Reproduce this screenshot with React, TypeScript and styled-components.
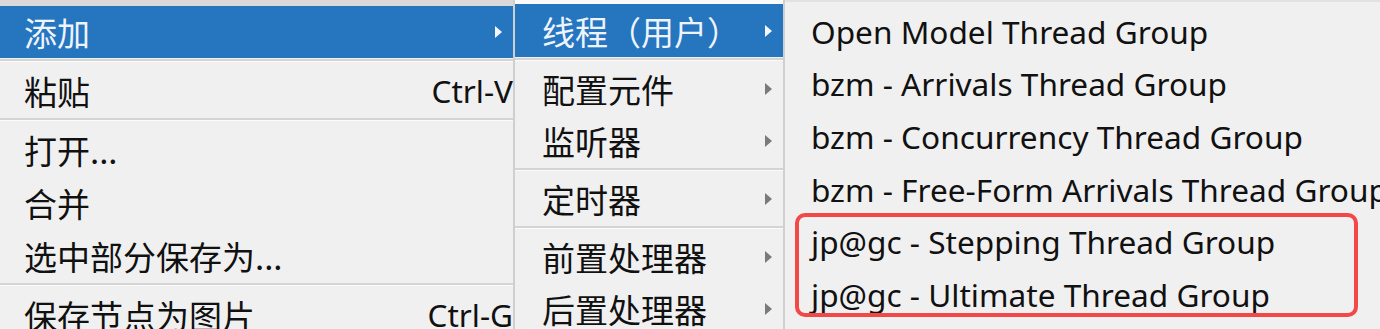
import React from 'react';
import styled, { createGlobalStyle } from 'styled-components';

const GlobalStyle = createGlobalStyle`
  html, body {
    margin: 0;
    padding: 0;
    background: #f0f0f0;
    overflow: hidden;
  }
  body {
    font-family: "Noto Sans", "Noto Sans CJK SC", sans-serif;
  }
`

const Screen = styled.div`
  display: flex;
  width: 1380px;
  height: 329px;
  overflow: hidden;
  background: #f0f0f0;
  position: relative;
`

const Menu = styled.div<{ $width: number; $top: number; $strip: string }>`
  display: flex;
  flex-direction: column;
  width: ${p => p.$width}px;
  flex: none;
  padding-top: ${p => p.$top}px;
  background: linear-gradient(${p => p.$strip}, ${p => p.$strip}) top / 100% ${p => p.$top}px no-repeat, #f0f0f0;
  border-right: 2px solid #cfcfcf;
`

const ThreadList = styled.div`
  flex: 1;
  display: flex;
  flex-direction: column;
  padding-top: 3px;
  border-top: 2px solid #e2e2e2;
`

const Row = styled.div<{ $active?: boolean; $height?: number; $indent: number }>`
  display: flex;
  align-items: center;
  height: ${p => p.$height || 53}px;
  flex: none;
  padding: 0 10px 0 ${p => p.$indent}px;
  background: ${p => (p.$active ? '#2675bf' : 'transparent')};
  color: ${p => (p.$active ? '#eef4fb' : '#111')};
  font-size: 33px;
  white-space: nowrap;
`

const Label = styled.span`
  flex: 1;
  font-family: "Noto Sans CJK SC", sans-serif;
`

const Shortcut = styled.span`
  font-family: "Noto Sans", sans-serif;
  font-size: 31.5px;
  margin-right: -10px;
`

const Arrow = styled.span<{ $light?: boolean }>`
  width: 0;
  height: 0;
  border-top: 6px solid transparent;
  border-bottom: 6px solid transparent;
  border-left: 7px solid ${p => (p.$light ? '#f4f8fc' : '#7a7a7a')};
  margin-right: 1px;
`

const Separator = styled.div`
  height: 6px;
  flex: none;
  display: flex;
  align-items: flex-start;
  padding-top: 1px;
  box-sizing: border-box;
  &::before {
    content: '';
    flex: 1;
    border-top: 2px solid #d4d4d4;
    border-bottom: 1px solid #fbfbfb;
  }
`

const ThreadRow = styled.div`
  height: 52.6px;
  flex: none;
  display: flex;
  align-items: center;
  padding-left: 26px;
  font-family: "Noto Sans", sans-serif;
  font-size: 31.6px;
  color: #111;
  white-space: nowrap;
`

const Highlight = styled.div`
  position: absolute;
  left: 795px;
  top: 213px;
  width: 563px;
  height: 104px;
  box-sizing: border-box;
  border: 4.5px solid #f24848;
  border-radius: 10px;
  pointer-events: none;
`

type Item =
  | { kind: 'item'; label: string; shortcut?: string; sub?: boolean; active?: boolean; height?: number }
  | { kind: 'sep' }

const editMenu: Item[] = [
  { kind: 'item', label: '添加', sub: true, active: true, height: 52 },
  { kind: 'sep' },
  { kind: 'item', label: '粘贴', shortcut: 'Ctrl-V' },
  { kind: 'sep' },
  { kind: 'item', label: '打开...' },
  { kind: 'item', label: '合并' },
  { kind: 'item', label: '选中部分保存为...' },
  { kind: 'sep' },
  { kind: 'item', label: '保存节点为图片', shortcut: 'Ctrl-G' },
]

const addMenu: Item[] = [
  { kind: 'item', label: '线程（用户）', sub: true, active: true },
  { kind: 'sep' },
  { kind: 'item', label: '配置元件', sub: true, height: 52 },
  { kind: 'item', label: '监听器', sub: true, height: 52 },
  { kind: 'sep' },
  { kind: 'item', label: '定时器', sub: true, height: 52 },
  { kind: 'sep' },
  { kind: 'item', label: '前置处理器', sub: true, height: 52 },
  { kind: 'item', label: '后置处理器', sub: true, height: 52 },
]

const threadGroups = [
  'Open Model Thread Group',
  'bzm - Arrivals Thread Group',
  'bzm - Concurrency Thread Group',
  'bzm - Free-Form Arrivals Thread Group',
  'jp@gc - Stepping Thread Group',
  'jp@gc - Ultimate Thread Group',
]

const MenuItems: React.FC<{ items: Item[]; indent: number }> = ({ items, indent }) => (
  <>
    {items.map((it, i) =>
      it.kind === 'sep' ? (
        <Separator key={i} />
      ) : (
        <Row key={i} $active={it.active} $height={it.height} $indent={indent}>
          <Label>{it.label}</Label>
          {it.shortcut && <Shortcut>{it.shortcut}</Shortcut>}
          {it.sub && <Arrow $light={it.active} />}
        </Row>
      )
    )}
  </>
)

const App: React.FC = () => {
  return (
    <>
      <GlobalStyle />
      <Screen>
        <Menu $width={513} $top={6} $strip="#d9d9d9">
          <MenuItems items={editMenu} indent={24} />
        </Menu>
        <Menu $width={268} $top={4} $strip="#fafafa">
          <MenuItems items={addMenu} indent={27} />
        </Menu>
        <ThreadList>
          {threadGroups.map(name => (
            <ThreadRow key={name}>{name}</ThreadRow>
          ))}
        </ThreadList>
        <Highlight />
      </Screen>
    </>
  )
}

export default App;
